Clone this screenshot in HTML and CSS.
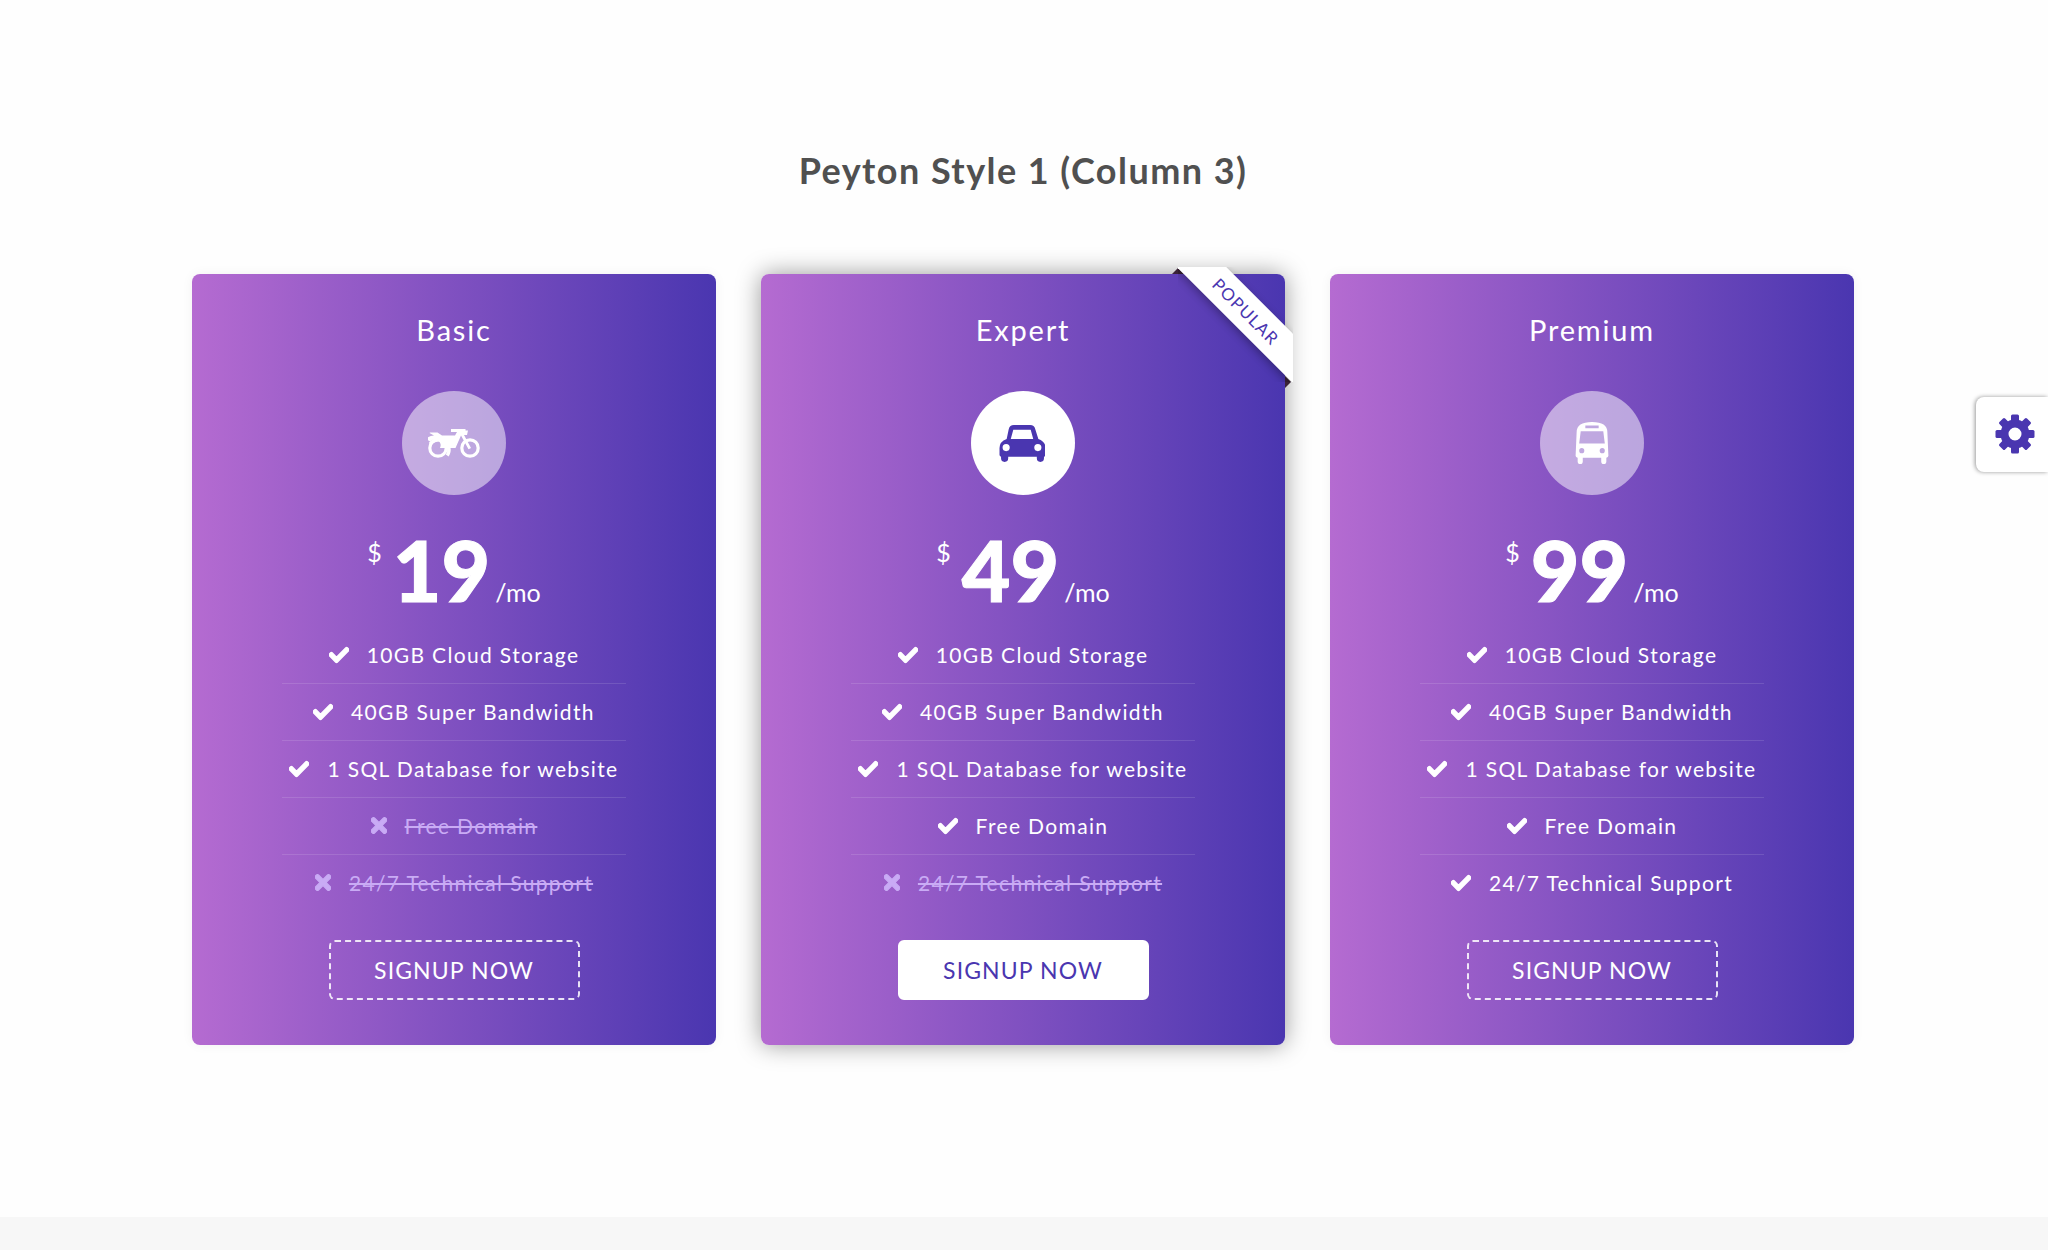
FILE: index.html
```html
<!DOCTYPE html>
<html lang="en">
<head>
  <meta charset="UTF-8">
  <meta name="viewport" content="width=device-width, initial-scale=1.0">
  <title>Peyton Style 1</title>
  <link rel="stylesheet" href="styles.css">
</head>
<body>
  <svg class="icon-defs" aria-hidden="true">
    <symbol id="i-check" viewBox="0 0 512 512"><path d="M173.898 439.404l-166.4-166.4c-9.997-9.997-9.997-26.206 0-36.204l36.203-36.204c9.997-9.998 26.207-9.998 36.204 0L192 312.69 432.095 72.596c9.997-9.997 26.207-9.997 36.204 0l36.203 36.204c9.997 9.997 9.997 26.206 0 36.204l-294.4 294.401c-9.998 9.997-26.207 9.997-36.204-.001z"/></symbol>
    <symbol id="i-times" viewBox="0 0 352 512"><path d="M242.72 256l100.07-100.07c12.28-12.28 12.28-32.19 0-44.48l-22.24-22.24c-12.28-12.28-32.19-12.28-44.48 0L176 189.28 75.93 89.21c-12.28-12.28-32.19-12.28-44.48 0L9.21 111.45c-12.28 12.28-12.28 32.19 0 44.48L109.28 256 9.21 356.07c-12.28 12.28-12.28 32.19 0 44.48l22.24 22.24c12.28 12.28 32.2 12.28 44.48 0L176 322.72l100.07 100.07c12.28 12.28 32.2 12.28 44.48 0l22.24-22.24c12.28-12.28 12.28-32.19 0-44.48L242.72 256z"/></symbol>
  </svg>

  <main class="pricing">
    <h1>Peyton Style 1 (Column 3)</h1>

    <div class="plans">
      <div class="plan">
        <h3>Basic</h3>
        <div class="plan-icon">
          <svg class="moto" viewBox="0 0 52 30">
            <path d="M2.200 16a10 10 0 0 1 17 11.500" fill="none" stroke="currentColor" stroke-width="3.500"/>
            <circle cx="10" cy="20" r="8.200" fill="none" stroke="currentColor" stroke-width="3.200"/>
            <circle cx="42" cy="20" r="8.200" fill="none" stroke="currentColor" stroke-width="3.200"/>
            <path d="M2 4.500h7.500l4.500 3h13l2-3.500h-6v-3h14.500v1.500h2.500l-1 4.500h-3l7 13-2.500 1.200-7.500-13.700-5.500 12.500h-15.500a6 6 0 0 0-10-6.500l-4-2.500a11 11 0 0 1 8-3.500l-4.500-2.500z"/>
          </svg>
        </div>
        <div class="price"><span class="currency">$</span><span class="amount">19</span><span class="period">/mo</span></div>
        <ul class="features">
          <li><svg class="tick"><use href="#i-check"/></svg>10GB Cloud Storage</li>
          <li><svg class="tick"><use href="#i-check"/></svg>40GB Super Bandwidth</li>
          <li><svg class="tick"><use href="#i-check"/></svg>1 SQL Database for website</li>
          <li class="off"><svg class="cross"><use href="#i-times"/></svg><s>Free Domain</s></li>
          <li class="off"><svg class="cross"><use href="#i-times"/></svg><s>24/7 Technical Support</s></li>
        </ul>
        <a class="btn" href="#">SIGNUP NOW</a>
      </div>

      <div class="plan featured">
        <div class="ribbon">
          <div class="ribbon-clip"><span>POPULAR</span></div>
        </div>
        <h3>Expert</h3>
        <div class="plan-icon">
          <svg class="car" viewBox="0 0 45 36">
            <path fill-rule="evenodd" d="M9.500 4q1-4 5-4h16q4 0 5 4l3 9.500q7 2.500 7 9v6.500q0 1.500-1.500 2v1.500a3.500 3.500 0 0 1-7 0v-1.500h-28v1.500a3.500 3.500 0 0 1-7 0v-1.500q-1.500-.5-1.500-2v-6.500q0-6.500 7-9zM14 4.500l-2.500 9h22l-2.500-9zM3.500 22a3.500 3.500 0 0 0 7 0a3.500 3.500 0 0 0-7 0zM34.500 22a3.500 3.500 0 0 0 7 0a3.500 3.500 0 0 0-7 0z"/>
          </svg>
        </div>
        <div class="price"><span class="currency">$</span><span class="amount">49</span><span class="period">/mo</span></div>
        <ul class="features">
          <li><svg class="tick"><use href="#i-check"/></svg>10GB Cloud Storage</li>
          <li><svg class="tick"><use href="#i-check"/></svg>40GB Super Bandwidth</li>
          <li><svg class="tick"><use href="#i-check"/></svg>1 SQL Database for website</li>
          <li><svg class="tick"><use href="#i-check"/></svg>Free Domain</li>
          <li class="off"><svg class="cross"><use href="#i-times"/></svg><s>24/7 Technical Support</s></li>
        </ul>
        <a class="btn" href="#">SIGNUP NOW</a>
      </div>

      <div class="plan">
        <h3>Premium</h3>
        <div class="plan-icon">
          <svg class="bus" viewBox="0 0 32 41">
            <path fill-rule="evenodd" d="M1 10q0-10 15-10t15 10l1 23q0 1.500-2 2v3.500a2.500 2.500 0 0 1-5 0v-3.500h-18v3.500a2.500 2.500 0 0 1-5 0v-3.500q-2-.5-2-2zM9.500 3.500v2.500h13v-2.500zM5 9l-1.500 12h25l-1.500-12zM3.500 28a2.500 2.500 0 0 0 5 0a2.500 2.500 0 0 0-5 0zM23.500 28a2.500 2.500 0 0 0 5 0a2.500 2.500 0 0 0-5 0z"/>
          </svg>
        </div>
        <div class="price"><span class="currency">$</span><span class="amount">99</span><span class="period">/mo</span></div>
        <ul class="features">
          <li><svg class="tick"><use href="#i-check"/></svg>10GB Cloud Storage</li>
          <li><svg class="tick"><use href="#i-check"/></svg>40GB Super Bandwidth</li>
          <li><svg class="tick"><use href="#i-check"/></svg>1 SQL Database for website</li>
          <li><svg class="tick"><use href="#i-check"/></svg>Free Domain</li>
          <li><svg class="tick"><use href="#i-check"/></svg>24/7 Technical Support</li>
        </ul>
        <a class="btn" href="#">SIGNUP NOW</a>
      </div>
    </div>
  </main>

  <footer class="page-foot"></footer>

  <div class="settings-tab">
    <svg viewBox="0 0 40 40">
      <circle cx="20" cy="20" r="10.500" fill="none" stroke="#4a36b0" stroke-width="8"/>
      <rect class="tooth" x="16" y="0.500" width="8" height="8" rx="1.500"/>
      <rect class="tooth" x="16" y="0.500" width="8" height="8" rx="1.500" transform="rotate(45 20 20)"/>
      <rect class="tooth" x="16" y="0.500" width="8" height="8" rx="1.500" transform="rotate(90 20 20)"/>
      <rect class="tooth" x="16" y="0.500" width="8" height="8" rx="1.500" transform="rotate(135 20 20)"/>
      <rect class="tooth" x="16" y="0.500" width="8" height="8" rx="1.500" transform="rotate(180 20 20)"/>
      <rect class="tooth" x="16" y="0.500" width="8" height="8" rx="1.500" transform="rotate(225 20 20)"/>
      <rect class="tooth" x="16" y="0.500" width="8" height="8" rx="1.500" transform="rotate(270 20 20)"/>
      <rect class="tooth" x="16" y="0.500" width="8" height="8" rx="1.500" transform="rotate(315 20 20)"/>
    </svg>
  </div>
</body>
</html>
```

FILE: styles.css
```css
* {
  box-sizing: border-box;
}
body {
  margin: 0;
  min-height: 100vh;
  display: flex;
  flex-direction: column;
  font-family: Lato, 'Open Sans', sans-serif;
  background: #fefefe;
  color: #fff;
  overflow: hidden;
}
.icon-defs {
  display: none;
}
.pricing {
  flex: 1;
  padding: 147px 194px 0 192px;
}
.pricing h1 {
  margin: 0 0 81px;
  height: 46px;
  font-size: 36px;
  line-height: 46px;
  font-weight: 700;
  letter-spacing: 1.45px;
  text-align: center;
  color: #505050;
}
.plans {
  display: grid;
  grid-template-columns: repeat(3, 1fr);
  gap: 45px;
}
.plan {
  position: relative;
  height: 771px;
  padding: 39px 90px 0;
  border-radius: 8px;
  background: linear-gradient(to right, #b56bd1, #4a36b0);
  box-shadow: 0 0 12px rgba(0, 0, 0, 0.05);
  text-align: center;
}
.plan.featured {
  box-shadow: 0 0 24px rgba(0, 0, 0, 0.4);
}
.plan h3 {
  margin: 0 0 44px;
  font-size: 29px;
  line-height: 34px;
  font-weight: 400;
  letter-spacing: 1.8px;
}
.plan-icon {
  width: 104px;
  height: 104px;
  margin: 0 auto;
  border-radius: 50%;
  display: flex;
  align-items: center;
  justify-content: center;
  background: rgba(255, 255, 255, 0.5);
  color: #fff;
}
.featured .plan-icon {
  background: #fff;
  color: #4a36b0;
}
.plan-icon svg {
  fill: currentColor;
}
.moto {
  width: 52px;
  height: 30px;
}
.car {
  width: 46px;
  height: 37px;
  margin-right: 2px;
}
.bus {
  width: 34px;
  height: 42px;
  margin-right: 1px;
}
.price {
  height: 132px;
  padding-top: 12px;
  line-height: 90px;
  white-space: nowrap;
}
.currency {
  font-size: 25px;
  vertical-align: 40px;
  margin-right: 11px;
}
.amount {
  font-size: 84px;
  font-weight: 900;
  -webkit-text-stroke: 1px #fff;
}
.period {
  font-size: 25px;
  margin-left: 5px;
}
.features {
  list-style: none;
  margin: 0;
  padding: 0;
}
.features li {
  height: 57px;
  padding-bottom: 1px;
  display: flex;
  align-items: center;
  justify-content: center;
  gap: 18px;
  font-size: 21px;
  letter-spacing: 1.35px;
  border-bottom: 1px solid rgba(255, 255, 255, 0.12);
  white-space: nowrap;
}
.features li:last-child {
  border-bottom: 0;
  padding-bottom: 2px;
}
.features li.off {
  color: #c9abf5;
}
.features svg {
  fill: currentColor;
  stroke: currentColor;
  flex: none;
}
.tick {
  width: 20px;
  height: 20px;
  stroke-width: 35px;
}
.cross {
  width: 16px;
  height: 23px;
  stroke-width: 25px;
}
.btn {
  display: block;
  width: 251px;
  height: 60px;
  margin: 28px auto 0;
  border: 2px dashed rgba(255, 255, 255, 0.85);
  border-radius: 6px;
  color: #fff;
  font-size: 23px;
  line-height: 56px;
  letter-spacing: 1.1px;
  text-decoration: none;
}
.featured .btn {
  background: #fff;
  border: 2px solid #fff;
  color: #4a36b0;
}

/* corner ribbon */
.ribbon {
  position: absolute;
  top: -7px;
  right: -8px;
  width: 115px;
  height: 115px;
}
.ribbon::before,
.ribbon::after {
  content: "";
  position: absolute;
  background: #3b2338;
}
.ribbon::before {
  top: 1px;
  left: -6px;
  width: 12px;
  height: 6px;
  clip-path: polygon(50% 0, 100% 100%, 0 100%);
}
.ribbon::after {
  top: 109px;
  left: 107px;
  width: 6px;
  height: 12px;
  clip-path: polygon(0 0, 100% 50%, 0 100%);
}
.ribbon-clip {
  position: relative;
  z-index: 1;
  width: 115px;
  height: 115px;
  overflow: hidden;
}
.ribbon-clip span {
  position: absolute;
  top: 27px;
  left: -22px;
  width: 180px;
  height: 35px;
  background: #fff;
  color: #4a36b0;
  font-size: 17px;
  line-height: 35px;
  letter-spacing: 1.2px;
  text-align: center;
  transform: rotate(45deg);
  box-shadow: 0 3px 8px rgba(0, 0, 0, 0.3);
}

.page-foot {
  height: 33px;
  background: #f7f7f7;
}
.settings-tab {
  position: absolute;
  top: 397px;
  right: 0;
  width: 72px;
  height: 75px;
  padding: 17px 0 0 19px;
  background: #fff;
  border-radius: 8px 0 0 8px;
  box-shadow: -1px 0 4px rgba(0, 0, 0, 0.4);
}
.settings-tab svg {
  display: block;
  width: 40px;
  height: 40px;
}
.tooth {
  fill: #4a36b0;
}
```
